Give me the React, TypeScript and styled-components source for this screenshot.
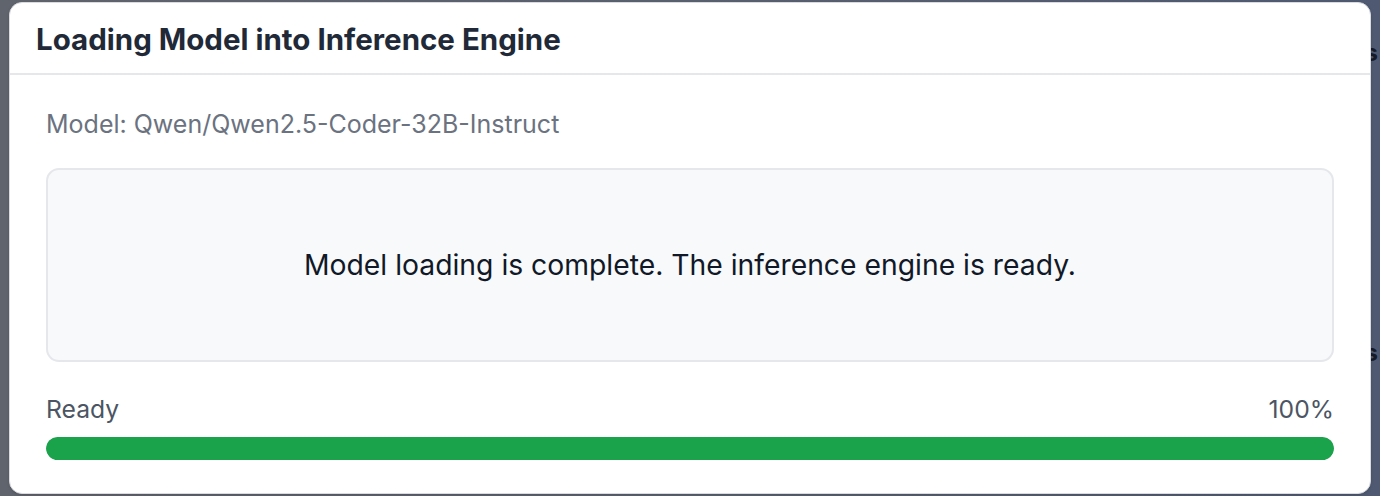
import React from 'react';
import styled, { createGlobalStyle } from 'styled-components';

const GlobalStyle = createGlobalStyle`
  html, body {
    margin: 0;
    padding: 0;
    height: 100%;
  }
  body {
    background: linear-gradient(to right, #60646d 0%, #5a6170 50%, #4f5a72 100%);
    font-family: Inter, "Noto Sans", "Liberation Sans", sans-serif;
    overflow: hidden;
  }
`;

const Backdrop = styled.div`
  position: relative;
  width: 1380px;
  height: 496px;
  box-sizing: border-box;
  padding: 2px 9px 2px 9px;
  display: flex;
`;

const BehindText = styled.span<{ $top: number }>`
  position: absolute;
  top: ${(p) => p.$top}px;
  right: 2px;
  font-size: 24px;
  font-weight: 700;
  color: #151b28;
`;

const Dialog = styled.div`
  position: relative;
  z-index: 1;
  flex: 1;
  background: #ffffff;
  border: 1px solid #d9dbe0;
  border-radius: 13px;
  box-shadow: 0 1px 3px rgba(0, 0, 0, 0.15);
  display: flex;
  flex-direction: column;
  overflow: hidden;
`;

const DialogHeader = styled.div`
  height: 72px;
  box-sizing: border-box;
  padding: 0 26px;
  display: flex;
  align-items: center;
  border-bottom: 2px solid #e5e7eb;
`;

const Title = styled.h2`
  margin: 0;
  font-size: 29.5px;
  font-weight: 700;
  color: #1f2937;
  line-height: 36px;
  margin-top: 2px;
`;

const DialogBody = styled.div`
  padding: 34px 36px 0 36px;
  display: flex;
  flex-direction: column;
`;

const ModelName = styled.div`
  font-size: 25px;
  color: #6b7280;
  line-height: 28px;
  margin-top: 1px;
  margin-bottom: -1px;
`;

const MessageBox = styled.div`
  margin-top: 31px;
  height: 194px;
  box-sizing: border-box;
  background: #f8f9fb;
  border: 2px solid #e5e7eb;
  border-radius: 13px;
  display: flex;
  align-items: center;
  justify-content: center;
  font-size: 28.3px;
  color: #111827;
`;

const StatusRow = styled.div`
  margin-top: 33px;
  display: flex;
  justify-content: space-between;
  align-items: center;
  font-size: 24.7px;
  line-height: 28px;
  color: #4b5563;
`;

const Track = styled.div`
  margin-top: 14px;
  height: 23px;
  border-radius: 12px;
  background: #e5e7eb;
  overflow: hidden;
`;

const Fill = styled.div`
  height: 100%;
  background: #1aa34a;
  border-radius: 12px;
`;

export default function App() {
  const progress = 100;
  return (
    <>
      <GlobalStyle />
      <Backdrop>
        <BehindText $top={38}>Models</BehindText>
        <BehindText $top={338}>Settings</BehindText>
        <Dialog>
          <DialogHeader>
            <Title>Loading Model into Inference Engine</Title>
          </DialogHeader>
          <DialogBody>
            <ModelName>Model: Qwen/Qwen2.5-Coder-32B-Instruct</ModelName>
            <MessageBox>Model loading is complete. The inference engine is ready.</MessageBox>
            <StatusRow>
              <span>Ready</span>
              <span>{progress}%</span>
            </StatusRow>
            <Track>
              <Fill style={{ width: `${progress}%` }} />
            </Track>
          </DialogBody>
        </Dialog>
      </Backdrop>
    </>
  );
}
